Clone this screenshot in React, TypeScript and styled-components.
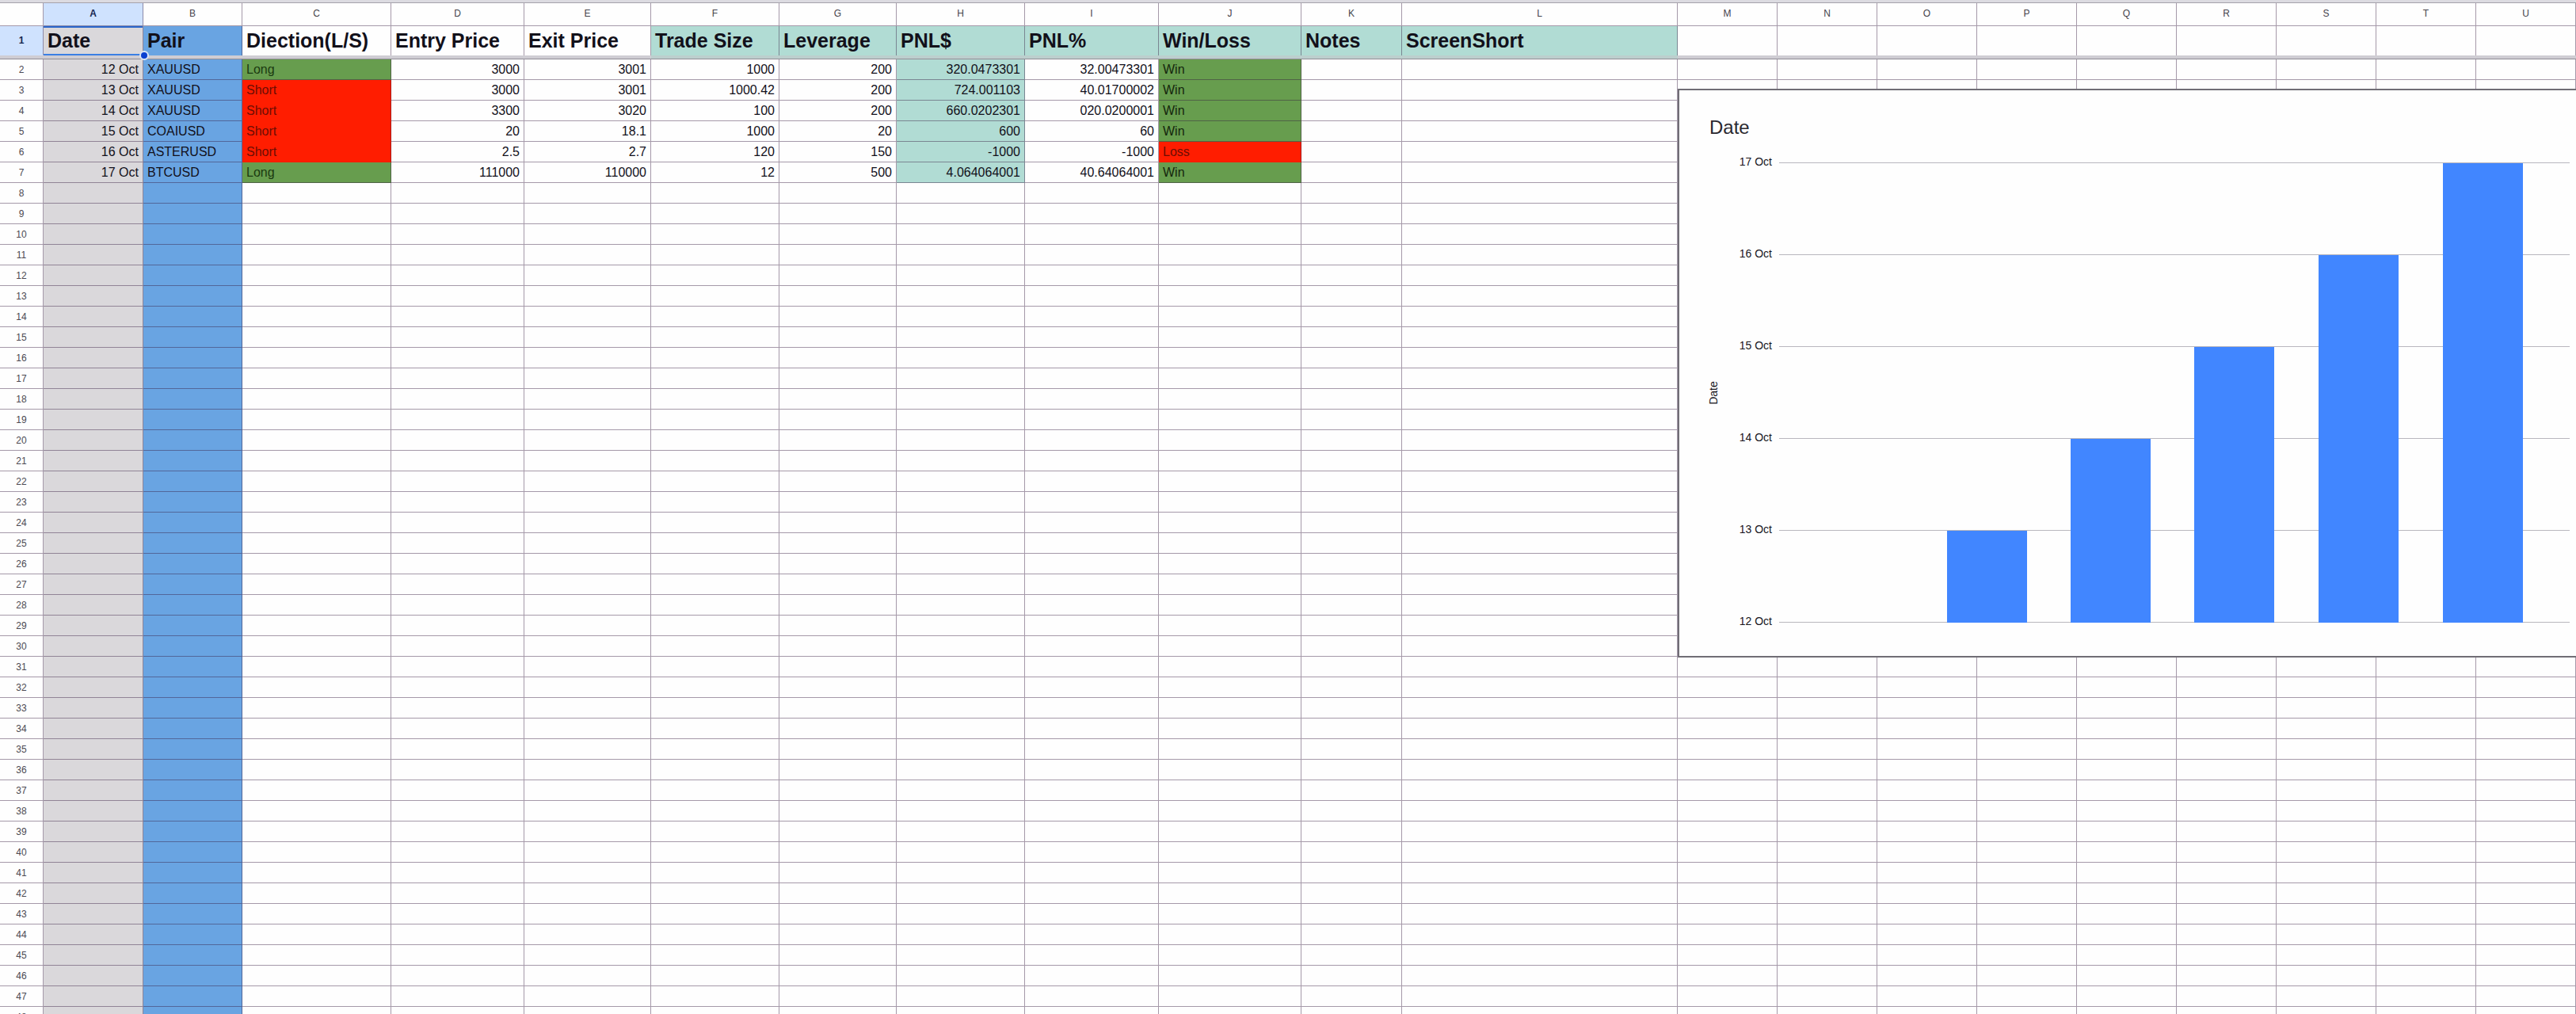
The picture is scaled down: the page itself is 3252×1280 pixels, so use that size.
import React from "react";
import styled, { createGlobalStyle } from "styled-components";

const GlobalStyle = createGlobalStyle`
  body {
    margin: 0;
    background: #fefefe;
    font-family: "Liberation Sans", Arial, sans-serif;
    color: #12101a;
  }
`;

const LINE = "rgba(52, 24, 62, 0.44)";
const GREY = "#dad8db";
const BLUE = "#69a4e2";
const TEAL = "#b1dcd4";
const GREEN = "#679d4e";
const RED = "#ff1d00";

type Column = { letter: string; width?: number; fill?: string; headFill?: string; title?: string };

const COLUMNS: Column[] = [
  { letter: "A", width: 126, fill: GREY, headFill: GREY, title: "Date" },
  { letter: "B", width: 125, fill: BLUE, headFill: BLUE, title: "Pair" },
  { letter: "C", width: 188, title: "Diection(L/S)" },
  { letter: "D", width: 168, title: "Entry Price" },
  { letter: "E", width: 160, title: "Exit Price" },
  { letter: "F", width: 162, headFill: TEAL, title: "Trade Size" },
  { letter: "G", width: 148, headFill: TEAL, title: "Leverage" },
  { letter: "H", width: 162, headFill: TEAL, title: "PNL$" },
  { letter: "I", width: 169, headFill: TEAL, title: "PNL%" },
  { letter: "J", width: 180, headFill: TEAL, title: "Win/Loss" },
  { letter: "K", width: 127, headFill: TEAL, title: "Notes" },
  { letter: "L", width: 348, headFill: TEAL, title: "ScreenShort" },
  ..."MNOPQRSTU".split("").map((letter) => ({ letter })),
];

const TRADES: string[][] = [
  ["12 Oct", "XAUUSD", "Long", "3000", "3001", "1000", "200", "320.0473301", "32.00473301", "Win"],
  ["13 Oct", "XAUUSD", "Short", "3000", "3001", "1000.42", "200", "724.001103", "40.01700002", "Win"],
  ["14 Oct", "XAUUSD", "Short", "3300", "3020", "100", "200", "660.0202301", "020.0200001", "Win"],
  ["15 Oct", "COAIUSD", "Short", "20", "18.1", "1000", "20", "600", "60", "Win"],
  ["16 Oct", "ASTERUSD", "Short", "2.5", "2.7", "120", "150", "-1000", "-1000", "Loss"],
  ["17 Oct", "BTCUSD", "Long", "111000", "110000", "12", "500", "4.064064001", "40.64064001", "Win"],
];

const LAST_ROW = 48;
const LEFT_ALIGNED = new Set(["B", "C", "J"]);

const Sheet = styled.main`
  position: relative;
  height: 100vh;
  overflow: hidden;
`;

const TopEdge = styled.div`
  height: 3px;
  background: #dcdbe1;
  border-bottom: 1px solid #a5a2ab;
`;

const Grid = styled.table`
  width: 100%;
  table-layout: fixed;
  border-collapse: separate;
  border-spacing: 0;
`;

const RowNumberCol = styled.col`
  width: 55px;
`;

const DataCol = styled.col<{ $width?: number }>`
  ${(p) => (p.$width ? `width: ${p.$width}px;` : "")}
`;

const Cell = styled.td<{ $fill?: string; $solid?: boolean; $left?: boolean; $ink?: string }>`
  box-sizing: border-box;
  height: 26px;
  padding: 1px 5px 0;
  border-right: 1px solid ${LINE};
  border-bottom: 1px solid ${(p) => (p.$solid ? "transparent" : LINE)};
  background: ${(p) => p.$fill ?? "transparent"};
  color: ${(p) => p.$ink ?? "inherit"};
  font-size: 16px;
  line-height: 20px;
  text-align: ${(p) => (p.$left ? "left" : "right")};
  white-space: nowrap;
`;

const Letter = styled.th<{ $active?: boolean }>`
  box-sizing: border-box;
  height: 29px;
  padding: 0 0 3px;
  border-right: 1px solid ${LINE};
  border-bottom: 1px solid ${LINE};
  background: ${(p) => (p.$active ? "#cfe2fe" : "transparent")};
  color: ${(p) => (p.$active ? "#16254f" : "#45434b")};
  font-size: 12px;
  font-weight: ${(p) => (p.$active ? 700 : 400)};
  line-height: 16px;
`;

const RowNumber = styled.th<{ $active?: boolean }>`
  box-sizing: border-box;
  padding: 0;
  border-right: 1px solid ${LINE};
  border-bottom: 1px solid ${(p) => (p.$active ? "transparent" : LINE)};
  background: ${(p) => (p.$active ? "#cfe2fe" : "transparent")};
  color: ${(p) => (p.$active ? "#16254f" : "#4b4952")};
  font-size: 12px;
  font-weight: ${(p) => (p.$active ? 700 : 400)};
  line-height: 16px;
`;

const Title = styled.th<{ $fill?: string; $selected?: boolean }>`
  position: relative;
  box-sizing: border-box;
  height: 37px;
  padding: 0 5px 2px;
  border-right: 1px solid ${LINE};
  background: ${(p) => p.$fill ?? "transparent"};
  ${(p) => (p.$selected ? "box-shadow: inset 0 2px #2a66cc, inset 0 -2px #3b7fe4;" : "")}
  font-size: 25px;
  font-weight: 700;
  line-height: 30px;
  text-align: left;
  white-space: nowrap;
`;

const FillHandle = styled.span`
  position: absolute;
  right: -8px;
  bottom: -6px;
  z-index: 1;
  width: 8px;
  height: 8px;
  border: 2px solid #dbe6f7;
  border-radius: 50%;
  background: #0b3fd0;
`;

const FreezeBar = styled.td<{ $tinted?: boolean }>`
  box-sizing: border-box;
  height: 5px;
  padding: 0;
  border-bottom: 1px solid #918e97;
  background: ${(p) => (p.$tinted ? "#bccfcd" : "#cfcdd3")};
`;

const ChartPanel = styled.figure`
  position: absolute;
  top: 112px;
  left: 2118px;
  right: 0;
  margin: 0;
  border: 2px solid #706d75;
  border-right: 0;
  background: #fefefe;
`;

const ChartDrawing = styled.svg`
  display: block;
  width: 100%;
  height: auto;
  font-family: "Liberation Sans", Arial, sans-serif;
  fill: #17151c;
`;

const BARS = [
  { day: 12, x: 181 },
  { day: 13, x: 338 },
  { day: 14, x: 494 },
  { day: 15, x: 650 },
  { day: 16, x: 807 },
  { day: 17, x: 964 },
];
const BASELINE = 672;
const STEP = 116;

function Chart() {
  return (
    <ChartPanel>
      <ChartDrawing viewBox="0 0 1132 714" role="img" aria-label="Date">
        <text x="38" y="55" fontSize="24" fill="#2b2930">Date</text>
        <text transform="translate(48 382) rotate(-90)" fontSize="14" textAnchor="middle">Date</text>
        {BARS.map(({ day }, i) => (
          <g key={day}>
            <rect x="126" y={BASELINE - i * STEP - 1} width="998" height="1" fill="#b9b7be" />
            <text x="117" y={BASELINE - i * STEP + 3} fontSize="14" textAnchor="end">{day} Oct</text>
          </g>
        ))}
        {BARS.map(({ day, x }, i) => (
          <rect key={day} x={x} y={BASELINE - i * STEP} width="101" height={i * STEP} fill="#4186ff" />
        ))}
      </ChartDrawing>
    </ChartPanel>
  );
}

function cellLook(letter: string, value: string | undefined, columnFill?: string) {
  if (value === "Long") return { $fill: GREEN, $ink: "#1b3a10" };
  if (value === "Win") return { $fill: GREEN, $ink: "#14260c" };
  if (value === "Short" || value === "Loss") return { $fill: RED, $ink: "#6d0d04", $solid: true };
  if (letter === "H" && value) return { $fill: TEAL };
  return { $fill: columnFill };
}

export default function App() {
  const rows = Array.from({ length: LAST_ROW - 1 }, (_, i) => i + 2);
  return (
    <>
      <GlobalStyle />
      <Sheet>
        <TopEdge />
        <Grid>
          <colgroup>
            <RowNumberCol />
            {COLUMNS.map((c) => (
              <DataCol key={c.letter} $width={c.width} />
            ))}
          </colgroup>
          <thead>
            <tr>
              <Letter as="td" />
              {COLUMNS.map((c) => (
                <Letter key={c.letter} scope="col" $active={c.letter === "A"}>{c.letter}</Letter>
              ))}
            </tr>
            <tr>
              <RowNumber scope="row" $active>1</RowNumber>
              {COLUMNS.map((c) => (
                <Title key={c.letter} $fill={c.headFill} $selected={c.letter === "A"}>
                  {c.title}
                  {c.letter === "A" && <FillHandle />}
                </Title>
              ))}
            </tr>
            <tr aria-hidden="true">
              <FreezeBar />
              {COLUMNS.map((c) => (
                <FreezeBar key={c.letter} $tinted={c.headFill === TEAL} />
              ))}
            </tr>
          </thead>
          <tbody>
            {rows.map((n) => (
              <tr key={n}>
                <RowNumber scope="row">{n}</RowNumber>
                {COLUMNS.map((c, i) => {
                  const value = TRADES[n - 2]?.[i];
                  return (
                    <Cell key={c.letter} $left={LEFT_ALIGNED.has(c.letter)} {...cellLook(c.letter, value, c.fill)}>
                      {value}
                    </Cell>
                  );
                })}
              </tr>
            ))}
          </tbody>
        </Grid>
        <Chart />
      </Sheet>
    </>
  );
}
